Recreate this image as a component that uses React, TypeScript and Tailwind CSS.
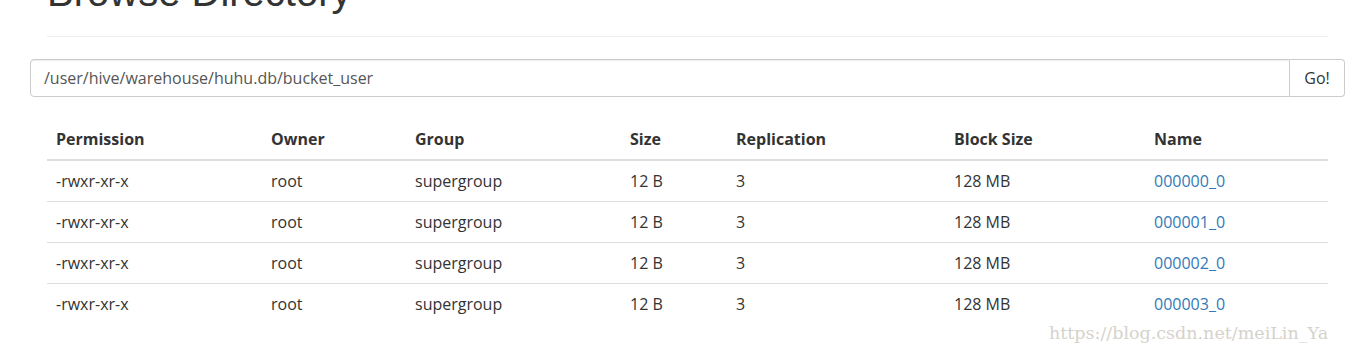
import React from "react";

const rows = ["000000_0", "000001_0", "000002_0", "000003_0"];

export default function App() {
  return (
    <div className="relative h-[352px] w-[1370px] overflow-hidden bg-white text-[#333]" style={{ fontFamily: '"Open Sans", "Noto Sans", sans-serif' }}>
      <div className="px-[47px] w-[1375px]">
        <div className="mt-[-30px] pb-[22px] border-b border-[#eee]">
          <h1 className="text-[40px] leading-[44px] font-normal text-[#333]" style={{ fontFamily: '"Liberation Sans", Arial, sans-serif' }}>
            Browse Directory
          </h1>
        </div>
      </div>
      <div className="ml-[30px] mt-[22px] flex w-[1315px] h-[38px]">
        <div className="flex-1 flex items-center border border-[#ccc] rounded-l-[4px] px-[13px] text-[16px] text-[#555] shadow-[inset_0_1px_1px_rgba(0,0,0,0.075)]">
          /user/hive/warehouse/huhu.db/bucket_user
        </div>
        <div className="w-[55px] flex items-center justify-center border border-l-0 border-[#ccc] rounded-r-[4px] text-[16px] text-[#333]">
          Go!
        </div>
      </div>
      <div className="ml-[47px] mt-[22px] w-[1281px]">
        <table className="w-full table-fixed border-collapse text-[16px] leading-[24px]">
          <colgroup>
            <col className="w-[216px]" />
            <col className="w-[144px]" />
            <col className="w-[215px]" />
            <col className="w-[106px]" />
            <col className="w-[218px]" />
            <col className="w-[200px]" />
            <col />
          </colgroup>
          <thead>
            <tr className="border-b-2 border-[#ddd]">
              {["Permission", "Owner", "Group", "Size", "Replication", "Block Size", "Name"].map((h, i) => (
                <th key={h} className={i === 0 ? "text-left font-bold px-[9px] py-[8px]" : "text-left font-bold px-[8px] py-[8px]"}>{h}</th>
              ))}
            </tr>
          </thead>
          <tbody>
            {rows.map((n) => (
              <tr key={n} className="border-t border-[#ddd]">
                <td className="px-[9px] py-[8px]">-rwxr-xr-x</td>
                <td className="px-[8px] py-[8px]">root</td>
                <td className="px-[8px] py-[8px]">supergroup</td>
                <td className="px-[8px] py-[8px]">12 B</td>
                <td className="px-[8px] py-[8px]">3</td>
                <td className="px-[8px] py-[8px]">128 MB</td>
                <td className="px-[8px] py-[8px] text-[#337ab7]">{n}</td>
              </tr>
            ))}
          </tbody>
        </table>
      </div>
      <div className="absolute left-[1049px] top-[320px] text-[17.5px] text-[#d5d2cc]" style={{ fontFamily: '"DejaVu Serif", "Liberation Serif", serif' }}>
        https://blog.csdn.net/meiLin_Ya
      </div>
    </div>
  );
}
